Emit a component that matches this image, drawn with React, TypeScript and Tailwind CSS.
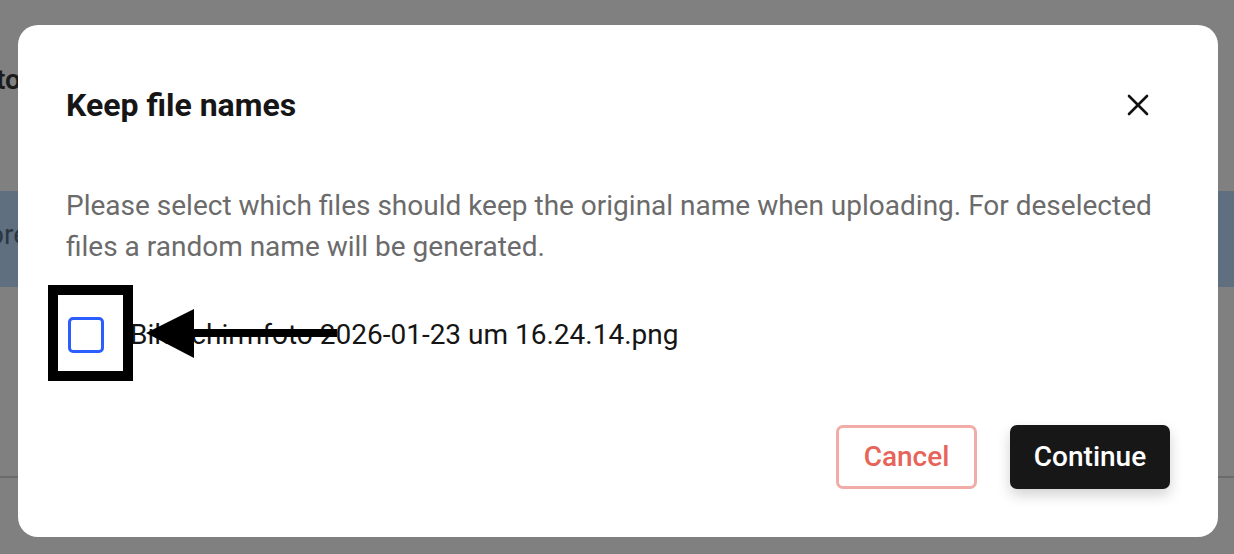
import { X } from 'lucide-react'

function Backdrop() {
  return (
    <div className="flex h-full w-full flex-col bg-[#808080]">
      <div className="h-[66px] shrink-0" />
      <div className="-ml-[4px] h-[28px] text-[28px] leading-[28px] font-semibold whitespace-nowrap text-[#1b1b1b]">to</div>
      <div className="h-[97px] shrink-0" />
      <div className="h-[96px] shrink-0 bg-[#5f6f80] pt-[30px]">
        <div className="-ml-[12px] text-[28px] leading-[28px] whitespace-nowrap text-[#2a3642]">ore</div>
      </div>
      <div className="h-[189px] shrink-0" />
      <div className="h-[2px] shrink-0 bg-[#6b6b6b]" />
    </div>
  )
}

export default function App() {
  return (
    <div className="relative h-[554px] w-[1234px] overflow-hidden font-['Roboto',sans-serif]">
      <Backdrop />

      <div className="absolute left-[18px] top-[25px] flex h-[512px] w-[1200px] flex-col rounded-[20px] bg-white px-[48px] pt-[57px] pb-[48px]">
        <div className="flex h-[46px] items-center justify-between">
          <h2 className="text-[32px] font-bold text-[#161616]">Keep file names</h2>
          <button className="mr-[14px] flex h-9 w-9 items-center justify-center text-[#111]">
            <X size={36} strokeWidth={1.75} />
          </button>
        </div>

        <p className="mt-[57px] text-[28px] leading-[41px] text-[#6b6b6b]">
          Please select which files should keep the original name when uploading. For deselected files a random name will be generated.
        </p>

        <label className="mt-[50px] flex h-9 items-center gap-[26px]">
          <span className="ml-[2px] block h-9 w-9 rounded-[5px] border-[3px] border-[#2b5dff] bg-white" />
          <span className="text-[28px] text-[#151515]">Bildschirmfoto 2026-01-23 um 16.24.14.png</span>
        </label>

        <div className="mt-auto flex justify-end gap-[33px]">
          <button className="h-[64px] w-[141px] rounded-[7px] border-[3px] border-[#f1aca7] text-[28px] font-medium text-[#e6645a]">
            Cancel
          </button>
          <button className="h-[64px] w-[160px] rounded-[7px] bg-[#171717] text-[28px] font-medium text-white shadow-[0_6px_14px_rgba(0,0,0,0.18)]">
            Continue
          </button>
        </div>
      </div>

      {/* annotation */}
      <div className="absolute left-[48px] top-[285px] h-[96px] w-[85px] border-[10px] border-black" />
      <svg className="absolute left-[140px] top-[300px]" width="210" height="65" viewBox="140 300 210 65">
        <polygon points="146,333 194,309 194,358" fill="#000" />
        <rect x="190" y="329" width="147" height="8" fill="#000" />
      </svg>
    </div>
  )
}
